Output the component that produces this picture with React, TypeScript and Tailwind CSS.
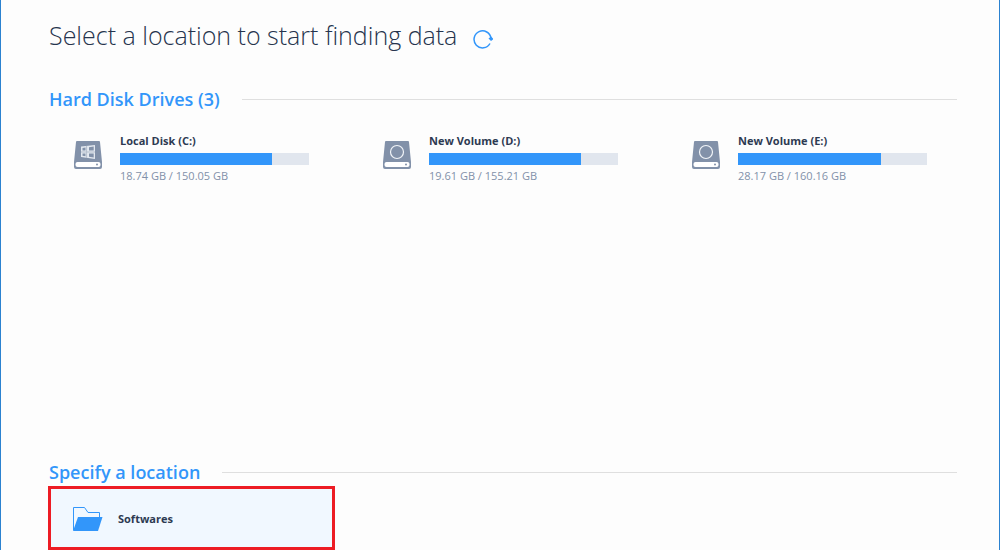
import React from "react";

type Drive = {
  name: string;
  free: string;
  total: string;
  usedPercent: number;
  system?: boolean;
};

const drives: Drive[] = [
  { name: "Local Disk (C:)", free: "18.74 GB", total: "150.05 GB", usedPercent: 80.5, system: true },
  { name: "New Volume (D:)", free: "19.61 GB", total: "155.21 GB", usedPercent: 80.5 },
  { name: "New Volume (E:)", free: "28.17 GB", total: "160.16 GB", usedPercent: 75.7 },
];

const RefreshIcon = () => (
  <svg width="20" height="20" viewBox="0 0 20 20" fill="none" aria-hidden="true">
    <path d="M17 14.5A8.500 8.500 0 1 1 18 9.500" stroke="#3296fa" strokeWidth="1.500" />
    <path d="M15.500 9.500 18 7.500 20 9.500V10.500L18 12z" fill="#3296fa" />
  </svg>
);

const DriveIcon = ({ system }: { system?: boolean }) => (
  <svg width="28" height="29" viewBox="0 0 28 29" className="shrink-0" aria-hidden="true">
    <path d="M2 1Q2 0 3 0h22q1 0 1 1L28 21V26q0 2-2 2H2q-2 0-2-2v-5z" fill="#8291a9" />
    <rect x="1.500" y="21" width="25" height="5" rx="2" fill="#fff" />
    <circle cx="23" cy="23.500" r="1" fill="#8291a9" />
    {system ? (
      <g>
        <path d="M7 5.500 21 4V18L7 16z" fill="#e3e8ef" />
        <path
          d="M8.500 7 11.500 6.600V9.500H8.500zM15 6.200 19.700 5.600V9.500H15zM8.500 12.500H11.500V15.200L8.500 14.800zM15 12.500H19.700V16.500L15 15.800z"
          fill="#8291a9"
        />
        <path d="M12.600 5v12M7 11h14" stroke="#b5bfcd" />
      </g>
    ) : (
      <circle cx="14" cy="11" r="6.500" fill="none" stroke="#f1f4f8" strokeWidth="1.200" />
    )}
  </svg>
);

const FolderIcon = () => (
  <svg width="30" height="25" viewBox="0 0 30 25" className="shrink-0" aria-hidden="true">
    <path d="M.5 23V.5H11.500L15 5.500H26.500V10" fill="none" stroke="#3296fa" />
    <path d="M5 10H29.500L25 24H0z" fill="#3296fa" />
  </svg>
);

const SectionTitle = ({ children }: { children: React.ReactNode }) => (
  <div className="flex items-center gap-[22px] pr-[19px]">
    <h2 className="text-lg leading-6 font-semibold text-[#3296fa]">{children}</h2>
    <div className="h-px flex-1 bg-[#dfdfdf]" />
  </div>
);

const DriveItem = ({ drive }: { drive: Drive }) => (
  <button type="button" className="flex items-start gap-[18px] pr-[49px] pl-[25px] text-left">
    <div className="pt-2">
      <DriveIcon system={drive.system} />
    </div>
    <div className="min-w-0 flex-1">
      <div className="text-[11px] leading-4 font-bold text-[#2d3a52]">{drive.name}</div>
      <div className="mt-1 h-3 bg-[#e1e6ee]">
        <div className="h-full bg-[#3296fa]" style={{ width: `${drive.usedPercent}%` }} />
      </div>
      <div className="mt-[3px] text-[11px] leading-4 text-[#8291a9]">
        {drive.free} / {drive.total}
      </div>
    </div>
  </button>
);

const App: React.FC = () => {
  return (
    <main className="flex min-h-screen flex-col border-x border-[#2b82d0] bg-[#fdfdfd] pt-[15px] pr-[23px] pl-12 font-['Open_Sans','Noto_Sans',sans-serif]">
      {/* Page title */}
      <header className="flex items-center gap-4">
        <h1 className="text-[25px] leading-10 font-light text-[#26344d]">
          Select a location to start finding data
        </h1>
        <button type="button" aria-label="Refresh" className="mt-2">
          <RefreshIcon />
        </button>
      </header>

      {/* Drives */}
      <section className="mt-8 flex-1">
        <SectionTitle>Hard Disk Drives (3)</SectionTitle>
        <div className="mt-[22px] grid grid-cols-3">
          {drives.map((drive) => (
            <DriveItem key={drive.name} drive={drive} />
          ))}
        </div>
      </section>

      {/* Chosen folder */}
      <section>
        <SectionTitle>Specify a location</SectionTitle>
        <button
          type="button"
          className="mt-0.5 -ml-px flex h-16 w-[287px] items-center gap-[15px] border-3 border-[#ed1c24] bg-[#f1f8ff] px-[22px] pt-0.5 text-left"
        >
          <FolderIcon />
          <span className="text-[11px] leading-4 font-bold text-[#2d3a52]">Softwares</span>
        </button>
      </section>
    </main>
  );
};

export default App;
